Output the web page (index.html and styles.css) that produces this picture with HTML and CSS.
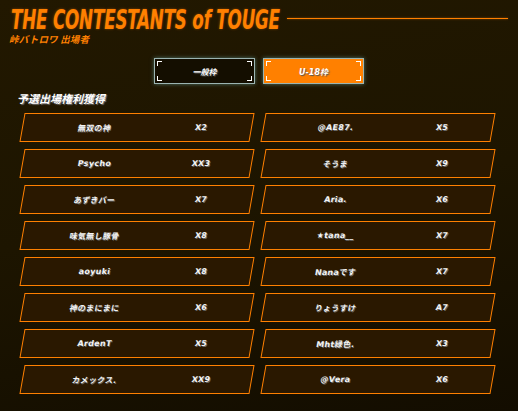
FILE: index.html
```html
<!DOCTYPE html>
<html lang="ja">
<head>
<meta charset="utf-8">
<link rel="stylesheet" href="styles.css">
</head>
<body>
<div class="page">
  <header class="head">
    <div class="title-row">
      <h1 class="title">THE CONTESTANTS of TOUGE</h1>
      <div class="rule"></div>
    </div>
    <div class="subtitle">峠バトロワ 出場者</div>
  </header>
  <div class="tabs">
    <button class="tab"><span class="c tl"></span><span class="c tr"></span><span class="c bl"></span><span class="c br"></span>一般枠</button>
    <button class="tab active"><span class="c tl"></span><span class="c tr"></span><span class="c bl"></span><span class="c br"></span>U-18枠</button>
  </div>
  <h2 class="section">予選出場権利獲得</h2>
  <div class="grid">
    <div class="col">
      <div class="card"><span class="name">無双の神</span><span class="score">X2</span></div>
      <div class="card"><span class="name">Psycho</span><span class="score">XX3</span></div>
      <div class="card"><span class="name">あずきバー</span><span class="score">X7</span></div>
      <div class="card"><span class="name">味気無し豚骨</span><span class="score">X8</span></div>
      <div class="card"><span class="name">aoyuki</span><span class="score">X8</span></div>
      <div class="card"><span class="name">神のまにまに</span><span class="score">X6</span></div>
      <div class="card"><span class="name">ArdenT</span><span class="score">X5</span></div>
      <div class="card"><span class="name">カメックス.</span><span class="score">XX9</span></div>
    </div>
    <div class="col">
      <div class="card"><span class="name">@AE87.</span><span class="score">X5</span></div>
      <div class="card"><span class="name">そうま</span><span class="score">X9</span></div>
      <div class="card"><span class="name">Aria.</span><span class="score">X6</span></div>
      <div class="card"><span class="name">★tana__</span><span class="score">X7</span></div>
      <div class="card"><span class="name">Nanaです</span><span class="score">X7</span></div>
      <div class="card"><span class="name">りょうすけ</span><span class="score">A7</span></div>
      <div class="card"><span class="name">Mht緑色.</span><span class="score">X3</span></div>
      <div class="card"><span class="name">@Vera</span><span class="score">X6</span></div>
    </div>
  </div>
</div>
</body>
</html>
```
FILE: styles.css
```css
* { box-sizing: border-box; margin: 0; padding: 0; }
html, body { width: 518px; height: 411px; overflow: hidden; }
body {
  background: linear-gradient(170deg, #221800 0%, #1d1500 50%, #130d00 100%);
  font-family: "DejaVu Sans", "Noto Sans CJK JP", sans-serif;
  color: #fff;
}
.page { padding: 6px 10px 0 9px; }
.title-row { display: flex; align-items: center; height: 27px; }
.title {
  font-family: "DejaVu Sans Condensed", "DejaVu Sans", sans-serif;
  font-style: italic;
  font-weight: bold;
  font-size: 27px;
  letter-spacing: -0.3px;
  color: #ff8000;
  padding-left: 3px;
  white-space: nowrap;
  text-shadow: 0 0 3px rgba(255, 120, 0, 0.45);
  line-height: 27px;
  transform: scaleX(0.69);
  transform-origin: left center;
  margin-right: -115px;
}
.rule { flex: 1; height: 1px; background: #ff8000; margin-top: -3px; box-shadow: 0 0 2px rgba(255,128,0,0.6); }
.subtitle {
  font-family: "Noto Sans CJK JP", sans-serif;
  font-weight: bold;
  font-style: italic;
  font-size: 9.5px;
  letter-spacing: 0.2px;
  line-height: 10px;
  color: #ff8000;
  margin-top: 1px;
}
.tabs { display: flex; justify-content: center; gap: 8px; margin-top: 14px; padding-left: 1px; }
.tab {
  position: relative;
  width: 101px; height: 26px;
  background: #140e00;
  border: 1px solid #9bb3b0;
  box-shadow: 0 0 4px rgba(120, 200, 200, 0.5);
  color: #fff;
  font-family: "DejaVu Sans", "Noto Sans CJK JP", sans-serif;
  font-weight: bold;
  font-style: italic;
  font-size: 8px;
  text-shadow: 1px 1px 1px #555;
}
.tab.active { background: #ff8000; }
.c { position: absolute; width: 5px; height: 5px; border-color: #fff; border-style: solid; border-width: 0; }
.tl { top: 2px; left: 2px; border-top-width: 1px; border-left-width: 1px; }
.tr { top: 2px; right: 2px; border-top-width: 1px; border-right-width: 1px; }
.bl { bottom: 2px; left: 2px; border-bottom-width: 1px; border-left-width: 1px; }
.br { bottom: 2px; right: 2px; border-bottom-width: 1px; border-right-width: 1px; }
.section {
  font-family: "Noto Sans CJK JP", sans-serif;
  font-weight: bold;
  font-style: italic;
  font-size: 11px;
  line-height: 12px;
  margin: 8px 0 0 8px;
  color: #fff;
  text-shadow: 1px 1px 1px #777;
}
.grid { display: grid; grid-template-columns: 230px 230px; column-gap: 11px; margin: 9px 0 0 13px; }
.col { display: flex; flex-direction: column; gap: 7px; }
.card {
  height: 29px;
  display: grid;
  grid-template-columns: 143px 70px;
  align-items: center;
  background: #2a1800;
  border: 1.3px solid #ff8000;
  transform: skewX(-10deg);
  font-family: "DejaVu Sans", "Noto Sans CJK JP", sans-serif;
  font-weight: bold;
  font-size: 8px;
  letter-spacing: 0.3px;
  color: #f4f4f4;
  text-shadow: 1px 1px 0 #666;
}
.name, .score { text-align: center; white-space: nowrap; }
```
